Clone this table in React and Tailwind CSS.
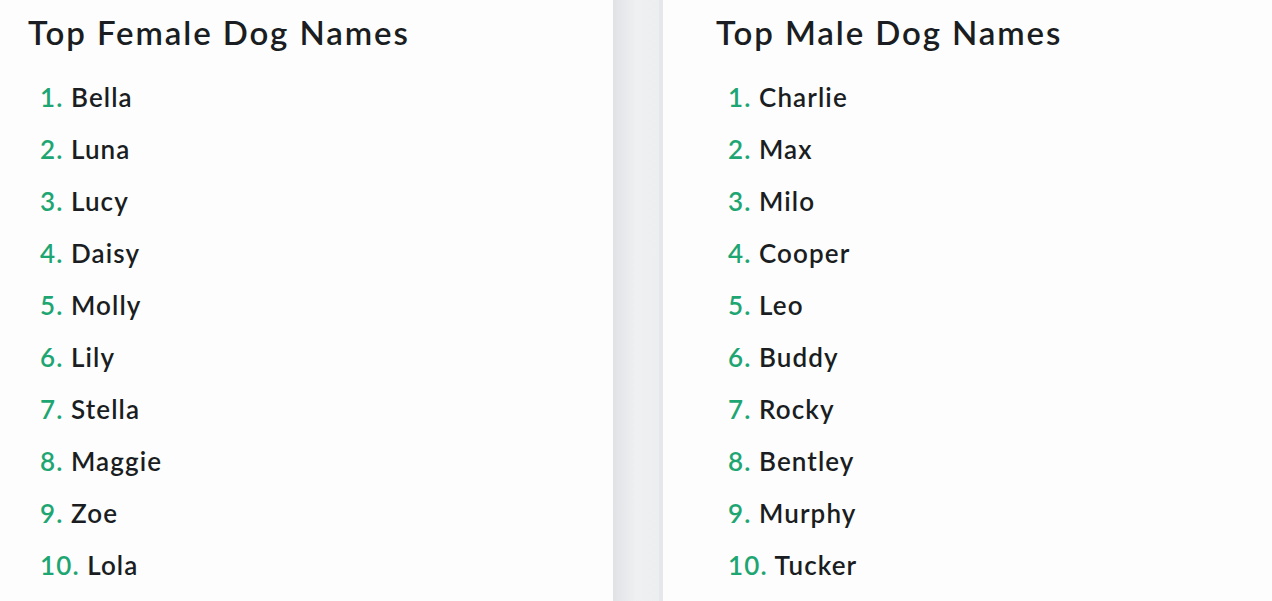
const female = ['Bella', 'Luna', 'Lucy', 'Daisy', 'Molly', 'Lily', 'Stella', 'Maggie', 'Zoe', 'Lola']
const male = ['Charlie', 'Max', 'Milo', 'Cooper', 'Leo', 'Buddy', 'Rocky', 'Bentley', 'Murphy', 'Tucker']

function NameList({ title, names, className }) {
  return (
    <div className={className}>
      <h2 className="text-[33px] leading-[40px] font-semibold text-[#1a1d21] tracking-[1.9px]">{title}</h2>
      <ol className="mt-[19px] pl-3">
        {names.map((name, i) => (
          <li key={name} className="text-[26px] leading-[52px] font-semibold text-[#1a1d21] tracking-[1.1px]">
            <span className="text-[#1ea672]">{i + 1}.</span> {name}
          </li>
        ))}
      </ol>
    </div>
  )
}

export default function App() {
  return (
    <div className="flex h-[601px] w-[1272px] bg-[#fdfdfd] overflow-hidden" style={{ fontFamily: 'Lato, "Noto Sans", sans-serif' }}>
      <NameList title="Top Female Dog Names" names={female} className="w-[613px] pl-7 pt-[12px]" />
      <div className="w-[50px] h-full flex">
        <div className="flex-1 bg-gradient-to-r from-[#e1e2e5] via-[#eef0f2] to-[#eceef0]" />
        <div className="w-[4px] bg-[#e6e7ea]" />
      </div>
      <NameList title="Top Male Dog Names" names={male} className="flex-1 pl-[53px] pt-[12px]" />
    </div>
  )
}
